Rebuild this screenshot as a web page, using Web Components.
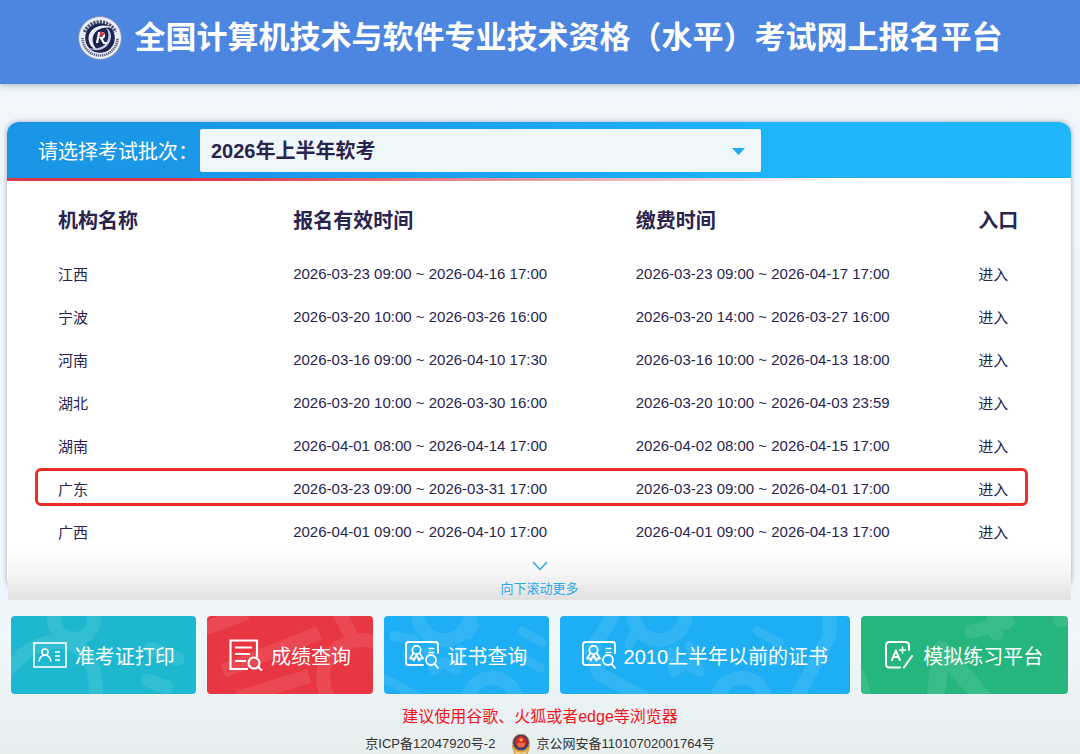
<!DOCTYPE html>
<html lang="zh-CN">
<head>
<meta charset="utf-8">
<meta name="viewport" content="width=device-width, initial-scale=1">
<title>全国计算机技术与软件专业技术资格（水平）考试网上报名平台</title>
<style>
    body {
        margin: 0;
        min-height: 100vh;
        font-family: "Liberation Sans", "Noto Sans CJK SC", sans-serif;
        color: #29244f;
        background: linear-gradient(#f1f6fb, #eff7fa 85%, #e6eeee);
    }

    main {
        padding: 38px 9px 0 7px;
    }
</style>
</head>
<body>
<site-header>全国计算机技术与软件专业技术资格（水平）考试网上报名平台</site-header>
<main>
    <batch-panel>
        <batch-select slot="head" label="请选择考试批次："></batch-select>
        <org-table></org-table>
        <scroll-more slot="foot">向下滚动更多</scroll-more>
    </batch-panel>
    <tile-bar>
        <link-tile kind="print">准考证打印</link-tile>
        <link-tile kind="score">成绩查询</link-tile>
        <link-tile kind="cert">证书查询</link-tile>
        <link-tile kind="old">2010上半年以前的证书</link-tile>
        <link-tile kind="practice">模拟练习平台</link-tile>
    </tile-bar>
</main>
<site-footer>建议使用谷歌、火狐或者edge等浏览器</site-footer>

<script>
const certIcon = `
    <svg class="icon" width="34" height="28" viewBox="0 0 34 28" fill="none" stroke="#fff" stroke-width="1.800" stroke-linecap="round" stroke-linejoin="round">
        <path d="M18 24H3.500Q1 24 1 21.500V3.500Q1 1 3.500 1H30.500Q33 1 33 3.500V12"/>
        <circle cx="11.500" cy="9" r="4.200"/>
        <path d="M8.500 12L5 17.500L7.500 17.300L8.800 19.500L11.500 14L14.200 19.500L15.500 17.300L18 17.500L14.500 12"/>
        <path d="M24 7.500H29M24 11.500H29" stroke-width="1.300"/>
        <circle cx="26" cy="19" r="5"/>
        <path d="M29.700 23L33 27"/>
    </svg>`;

const tiles = {
    print: {
        color: '#1eb8cf',
        icon: `
            <svg class="icon" width="34" height="26" viewBox="0 0 34 26" fill="none" stroke="#fff" stroke-width="1.600">
                <rect x="1" y="1" width="32" height="24"/>
                <circle cx="12" cy="10" r="3"/>
                <path d="M6 19.500C6.500 15.500 8.500 13.200 12 13.200S17.500 15.500 18 19.500"/>
                <path d="M22 10H27M22 14H27M22 18H27" stroke-width="1.300"/>
            </svg>`,
        art: `
            <circle cx="63" cy="3" r="20"/>
            <path d="M-6 58C12 34 28 26 46 26C74 26 88 48 84 84"/>
            <path d="M136 64L155 71M140 33L166 43"/>`,
        box: '0 0 185 78'
    },
    score: {
        color: '#e83642',
        icon: `
            <svg class="icon" width="34" height="32" viewBox="0 0 34 32" fill="none" stroke="#fff" stroke-width="2.200">
                <path d="M19 30H1.500V1.500H28V18M6 8.500H23M6 15H21M6 22H17"/>
                <circle cx="25" cy="24" r="5.500"/>
                <path d="M29 28L33 31.500"/>
            </svg>`,
        art: `
            <path d="M-6 14L40 -3M16 55L112 17M30 82L102 60" stroke-linecap="butt"/>
            <path d="M132 -3L142 16"/>
            <circle cx="154" cy="62" r="38"/>`,
        box: '0 0 165 78'
    },
    cert: {
        color: '#1eaef3',
        icon: certIcon,
        art: `
            <circle cx="60" cy="-2" r="26"/>
            <path d="M10 20L30 24L24 38M44 36L50 54L60 46L72 54L76 34M84 18L90 10" stroke-width="10"/>
            <path d="M-4 60L36 82M138 15L158 27M134 40L156 52" stroke-width="9"/>
            <circle cx="108" cy="86" r="24"/>`,
        box: '0 0 165 78'
    },
    old: {
        color: '#1eaef3',
        icon: certIcon,
        art: `
            <path d="M56 -4L32 34L40 58L84 82M270 -4V20L238 80"/>
            <circle cx="100" cy="-2" r="26"/>
            <path d="M112 36L114 56L126 48L140 56L130 30M76 16L70 28" stroke-width="10"/>
            <path d="M198 15L220 27M198 36L216 46" stroke-width="9"/>
            <circle cx="182" cy="86" r="24"/>`,
        box: '0 0 291 78'
    },
    practice: {
        color: '#25b67d',
        icon: `
            <svg class="icon" width="28" height="28" viewBox="0 0 28 28" fill="none" stroke="#fff" stroke-width="2" stroke-linecap="round" stroke-linejoin="round">
                <path d="M15 26.500H4.500Q1 26.500 1 23V4.500Q1 1 4.500 1H20.500Q24 1 24 4.500V9"/>
                <path d="M7 19L10.800 9.500L14.800 19M8.500 16H13.300"/>
                <path d="M17.500 6V12M14.500 9H20.500" stroke-width="1.500"/>
                <path d="M27 15L19 26.500"/>
            </svg>`,
        art: `
            <path d="M109 16L145 6M130 -6L134 18"/>
            <path d="M72 90L80 34L124 86" stroke-width="18"/>
            <circle cx="198" cy="3" r="4" stroke-width="10"/>
            <path d="M0 58L8 84" stroke-width="8"/>`,
        box: '0 0 205 78'
    }
};

class SiteHeader extends HTMLElement {
    constructor() {
        super();
        this.attachShadow({ mode: 'open' });
    }

    connectedCallback() {
        this.shadowRoot.innerHTML = `
            <style>
                :host {
                    display: block;
                    background: #4c86e0;
                    box-shadow: 0 2px 6px rgba(60, 80, 100, 0.35);
                }

                header {
                    display: flex;
                    align-items: center;
                    justify-content: center;
                    gap: 13px;
                    padding: 14px 0 22px;
                }

                svg {
                    flex: none;
                }

                h1 {
                    margin: 0;
                    font-size: 31px;
                    line-height: 48px;
                    font-weight: 700;
                    color: #fff;
                }
            </style>
            <header>
                <svg width="44" height="44" viewBox="0 0 44 44" aria-hidden="true">
                    <circle cx="22" cy="22" r="21.500" fill="#e9edf6" stroke="#7d8fb8"/>
                    <path d="M6.500 16A17 17 0 0 1 37.500 16" fill="none" stroke="#4a5070" stroke-width="3.500" stroke-dasharray="2.200 1"/>
                    <path d="M4.500 22A17.500 17.500 0 0 0 39.500 22" fill="none" stroke="#5a6080" stroke-width="2.500" stroke-dasharray="1.300 0.800"/>
                    <circle cx="22" cy="22" r="14.800" fill="#1d2350"/>
                    <path d="M34 12C24 6 11 12 10.500 22C10.500 28 14 33 20 34C13 29 13 19 19 14.500C24 11 29 11 34 12Z" fill="#e9edf6"/>
                    <path d="M11 32C21 38 32 31 33 21C33 16 31 13 28 12C32 17 31 26 25 30C20 33 15 33 11 32Z" fill="#c5cde2"/>
                    <path d="M19 27L21 17H23.500C27 17 27 22 23 22L26 27H29" fill="none" stroke="#fff" stroke-width="2.200"/>
                    <path d="M22 15L27 18L22 21Z" fill="#d8323e"/>
                </svg>
                <h1><slot></slot></h1>
            </header>
        `;
    }
}

class BatchPanel extends HTMLElement {
    constructor() {
        super();
        this.attachShadow({ mode: 'open' });
    }

    connectedCallback() {
        this.shadowRoot.innerHTML = `
            <style>
                :host {
                    display: flow-root;
                    background: #fff;
                    border-radius: 12px;
                    box-shadow: 0 0 5px rgba(70, 90, 100, 0.5);
                }

                .head {
                    padding: 7px 31px 6px;
                    border-radius: 12px 12px 0 0;
                    background: linear-gradient(90deg, #1a95e5, #1a9be8 30%, #1fb3fa 70%, #20b6fc);
                }

                .line {
                    height: 3px;
                    background: linear-gradient(90deg, #dc3a48, #dc3a48 20%, rgba(232, 54, 66, 0) 80%);
                }

                .body {
                    padding: 6px 43px 0 28px;
                }
            </style>
            <div class="head"><slot name="head"></slot></div>
            <div class="line"></div>
            <div class="body"><slot></slot></div>
            <slot name="foot"></slot>
        `;
    }
}

class BatchSelect extends HTMLElement {
    constructor() {
        super();
        this.attachShadow({ mode: 'open' });
    }

    connectedCallback() {
        this.shadowRoot.innerHTML = `
            <style>
                :host {
                    display: flex;
                    align-items: center;
                    font-size: 20px;
                }

                label {
                    flex: none;
                    width: 162px;
                    color: #fff;
                    white-space: nowrap;
                }

                .box {
                    position: relative;
                    width: 56%;
                }

                select {
                    appearance: none;
                    display: block;
                    width: 100%;
                    height: 43px;
                    padding: 0 40px 0 11px;
                    border: 0;
                    border-radius: 2px;
                    background: #f0f7fa;
                    font: inherit;
                    font-weight: 700;
                    color: #29244f;
                }

                svg {
                    position: absolute;
                    top: 19px;
                    right: 16px;
                    pointer-events: none;
                }
            </style>
            <label for="batch">${this.getAttribute('label')}</label>
            <div class="box">
                <select id="batch"><option>2026年上半年软考</option></select>
                <svg width="13" height="7" viewBox="0 0 13 7"><path d="M0 0H13L6.500 7Z" fill="#20acf2"/></svg>
            </div>
        `;
    }
}

class OrgTable extends HTMLElement {
    constructor() {
        super();
        this.attachShadow({ mode: 'open' });
        this.filas = [
            ['江西', '2026-03-23 09:00 ~ 2026-04-16 17:00', '2026-03-23 09:00 ~ 2026-04-17 17:00'],
            ['宁波', '2026-03-20 10:00 ~ 2026-03-26 16:00', '2026-03-20 14:00 ~ 2026-03-27 16:00'],
            ['河南', '2026-03-16 09:00 ~ 2026-04-10 17:30', '2026-03-16 10:00 ~ 2026-04-13 18:00'],
            ['湖北', '2026-03-20 10:00 ~ 2026-03-30 16:00', '2026-03-20 10:00 ~ 2026-04-03 23:59'],
            ['湖南', '2026-04-01 08:00 ~ 2026-04-14 17:00', '2026-04-02 08:00 ~ 2026-04-15 17:00'],
            ['广东', '2026-03-23 09:00 ~ 2026-03-31 17:00', '2026-03-23 09:00 ~ 2026-04-01 17:00'],
            ['广西', '2026-04-01 09:00 ~ 2026-04-10 17:00', '2026-04-01 09:00 ~ 2026-04-13 17:00']
        ];
        this.marcada = '广东';
    }

    connectedCallback() {
        this.shadowRoot.innerHTML = `
            <style>
                :host {
                    display: block;
                }

                table {
                    width: 100%;
                    table-layout: fixed;
                    border-collapse: collapse;
                    text-align: left;
                    white-space: nowrap;
                }

                th, td {
                    padding: 0;
                }

                th {
                    width: 34.5%;
                    height: 65px;
                    font-size: 20px;
                    font-weight: 700;
                }

                th:first-child {
                    width: 26%;
                }

                th:last-child {
                    width: 5%;
                }

                th:first-child, td:first-child {
                    padding-left: 23px;
                    box-sizing: border-box;
                }

                td {
                    height: 43px;
                    font-size: 15px;
                }

                a {
                    color: inherit;
                    text-decoration: none;
                }

                tr {
                    position: relative;
                }

                .marcada::after {
                    content: "";
                    position: absolute;
                    inset: 1px 0 4px;
                    border: 3px solid #ee2d27;
                    border-radius: 6px;
                    pointer-events: none;
                }
            </style>
            <table>
                <thead>
                    <tr><th>机构名称</th><th>报名有效时间</th><th>缴费时间</th><th>入口</th></tr>
                </thead>
                <tbody>
                    ${this.filas.map(([nombre, registro, pago]) => `
                        <tr class="${nombre === this.marcada ? 'marcada' : ''}">
                            <td>${nombre}</td><td>${registro}</td><td>${pago}</td><td><a href="#">进入</a></td>
                        </tr>
                    `).join('')}
                </tbody>
            </table>
        `;
    }
}

class ScrollMore extends HTMLElement {
    constructor() {
        super();
        this.attachShadow({ mode: 'open' });
    }

    connectedCallback() {
        this.shadowRoot.innerHTML = `
            <style>
                :host {
                    display: block;
                    margin: -3px 0 -10px 1px;
                }

                button {
                    display: flex;
                    flex-direction: column;
                    align-items: center;
                    gap: 8px;
                    width: 100%;
                    padding: 11px 0 1px;
                    border: 0;
                    background: linear-gradient(rgba(255, 255, 255, 0), #f4f4f4 50%, #e0e0e0);
                    font: inherit;
                    font-size: 13px;
                    line-height: 20px;
                    color: #2ba9ea;
                }
            </style>
            <button type="button">
                <svg width="16" height="10" viewBox="0 0 16 10" fill="none" stroke="#2ba9ea" stroke-width="1.500"><path d="M1 1L8 8.500L15 1"/></svg>
                <slot></slot>
            </button>
        `;
    }
}

class TileBar extends HTMLElement {
    constructor() {
        super();
        this.attachShadow({ mode: 'open' });
    }

    connectedCallback() {
        this.shadowRoot.innerHTML = `
            <style>
                :host {
                    display: block;
                }

                nav {
                    display: flex;
                    gap: 11px;
                    padding: 26px 3px 0 4px;
                }

                ::slotted(*) {
                    flex: 1 1 auto;
                }
            </style>
            <nav><slot></slot></nav>
        `;
    }
}

class LinkTile extends HTMLElement {
    constructor() {
        super();
        this.attachShadow({ mode: 'open' });
    }

    connectedCallback() {
        const tile = tiles[this.getAttribute('kind')];
        this.shadowRoot.innerHTML = `
            <style>
                :host {
                    display: block;
                }

                a {
                    position: relative;
                    display: flex;
                    align-items: center;
                    justify-content: center;
                    gap: 8px;
                    height: 78px;
                    padding: 0 20px;
                    overflow: hidden;
                    border-radius: 4px;
                    background: ${tile.color};
                    color: #fff;
                    font-size: 20px;
                    text-decoration: none;
                    white-space: nowrap;
                }

                :host([kind="practice"]) a {
                    gap: 10px;
                    padding: 0 23px;
                }

                .art {
                    position: absolute;
                    inset: 0;
                    width: 100%;
                    height: 100%;
                }

                .icon, span {
                    position: relative;
                    flex: none;
                }
            </style>
            <a href="#">
                <svg class="art" viewBox="${tile.box}" preserveAspectRatio="xMidYMid slice" aria-hidden="true">
                    <g opacity="0.09" fill="none" stroke="#fff" stroke-width="14" stroke-linecap="round" stroke-linejoin="round">${tile.art}</g>
                </svg>
                ${tile.icon}
                <span><slot></slot></span>
            </a>
        `;
    }
}

class SiteFooter extends HTMLElement {
    constructor() {
        super();
        this.attachShadow({ mode: 'open' });
    }

    connectedCallback() {
        this.shadowRoot.innerHTML = `
            <style>
                :host {
                    display: block;
                    padding-top: 10px;
                    text-align: center;
                }

                p {
                    margin: 0;
                    font-size: 16px;
                    line-height: 26px;
                    color: #f5141e;
                }

                div {
                    display: flex;
                    justify-content: center;
                    gap: 16px;
                    padding-top: 4px;
                    font-size: 13px;
                    line-height: 20px;
                }

                a {
                    display: flex;
                    align-items: center;
                    gap: 5px;
                    color: #333;
                    text-decoration: none;
                }
            </style>
            <footer>
                <p><slot></slot></p>
                <div>
                    <a href="#">京ICP备12047920号-2</a>
                    <a href="#">
                        <svg width="20" height="20" viewBox="0 0 20 20" aria-hidden="true">
                            <path d="M1 11C1 16 3 17 3 20H17C17 17 19 16 19 11Z" fill="#dba64c"/>
                            <path d="M4 17Q10 20 16 17L15 20H5Z" fill="#f1d08a"/>
                            <circle cx="10" cy="8.500" r="8.300" fill="#34406f" stroke="#c98b45"/>
                            <circle cx="10" cy="8" r="6" fill="#d8262c"/>
                            <path d="M10 3L10.700 5H12.500L11 6.200L11.600 8L10 7L8.400 8L9 6.200L7.500 5H9.300Z" fill="#f3c353"/>
                            <path d="M6 10H14M7 12H13" stroke="#eeb74d"/>
                        </svg>
                        京公网安备11010702001764号
                    </a>
                </div>
            </footer>
        `;
    }
}

customElements.define('site-header', SiteHeader);
customElements.define('batch-panel', BatchPanel);
customElements.define('batch-select', BatchSelect);
customElements.define('org-table', OrgTable);
customElements.define('scroll-more', ScrollMore);
customElements.define('tile-bar', TileBar);
customElements.define('link-tile', LinkTile);
customElements.define('site-footer', SiteFooter);
</script>
</body>
</html>
